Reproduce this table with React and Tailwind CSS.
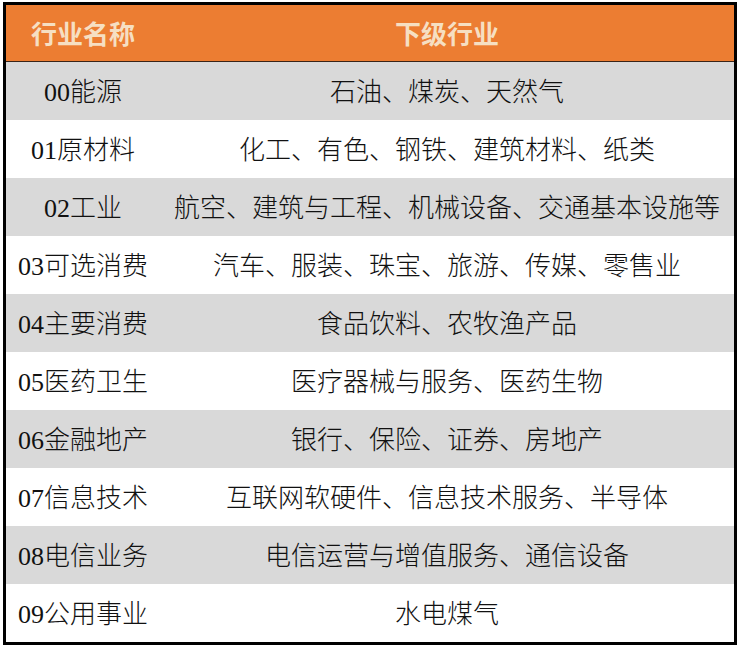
const rows = [
  ["00能源", "石油、煤炭、天然气"],
  ["01原材料", "化工、有色、钢铁、建筑材料、纸类"],
  ["02工业", "航空、建筑与工程、机械设备、交通基本设施等"],
  ["03可选消费", "汽车、服装、珠宝、旅游、传媒、零售业"],
  ["04主要消费", "食品饮料、农牧渔产品"],
  ["05医药卫生", "医疗器械与服务、医药生物"],
  ["06金融地产", "银行、保险、证券、房地产"],
  ["07信息技术", "互联网软硬件、信息技术服务、半导体"],
  ["08电信业务", "电信运营与增值服务、通信设备"],
  ["09公用事业", "水电煤气"],
];

export default function App() {
  return (
    <div className="bg-white w-[740px] h-[647px] pt-[2px] pl-[3px]">
      <div className="w-[734px] border-[3px] border-black flex flex-col">
        <div
          className="flex h-[57px] bg-[#ec7d32] border-b border-[#3a2418] items-center text-[#f6dfc2] font-bold text-[26px] leading-none"
          style={{ fontFamily: '"Noto Sans CJK SC", sans-serif' }}
        >
          <div className="w-[154px] flex justify-center">行业名称</div>
          <div className="flex-1 flex justify-center">下级行业</div>
        </div>
        {rows.map(([a, b], i) => (
          <div
            key={i}
            className={`flex h-[58px] items-center text-[26px] leading-none text-[#111] font-light pt-[3px] ${i % 2 === 0 ? "bg-[#d9d9d9]" : "bg-white"}`}
            style={{ fontFamily: '"Liberation Serif", "Noto Sans CJK SC", serif' }}
          >
            <div className="w-[154px] flex justify-center">{a}</div>
            <div className="flex-1 flex justify-center">{b}</div>
          </div>
        ))}
      </div>
    </div>
  );
}
